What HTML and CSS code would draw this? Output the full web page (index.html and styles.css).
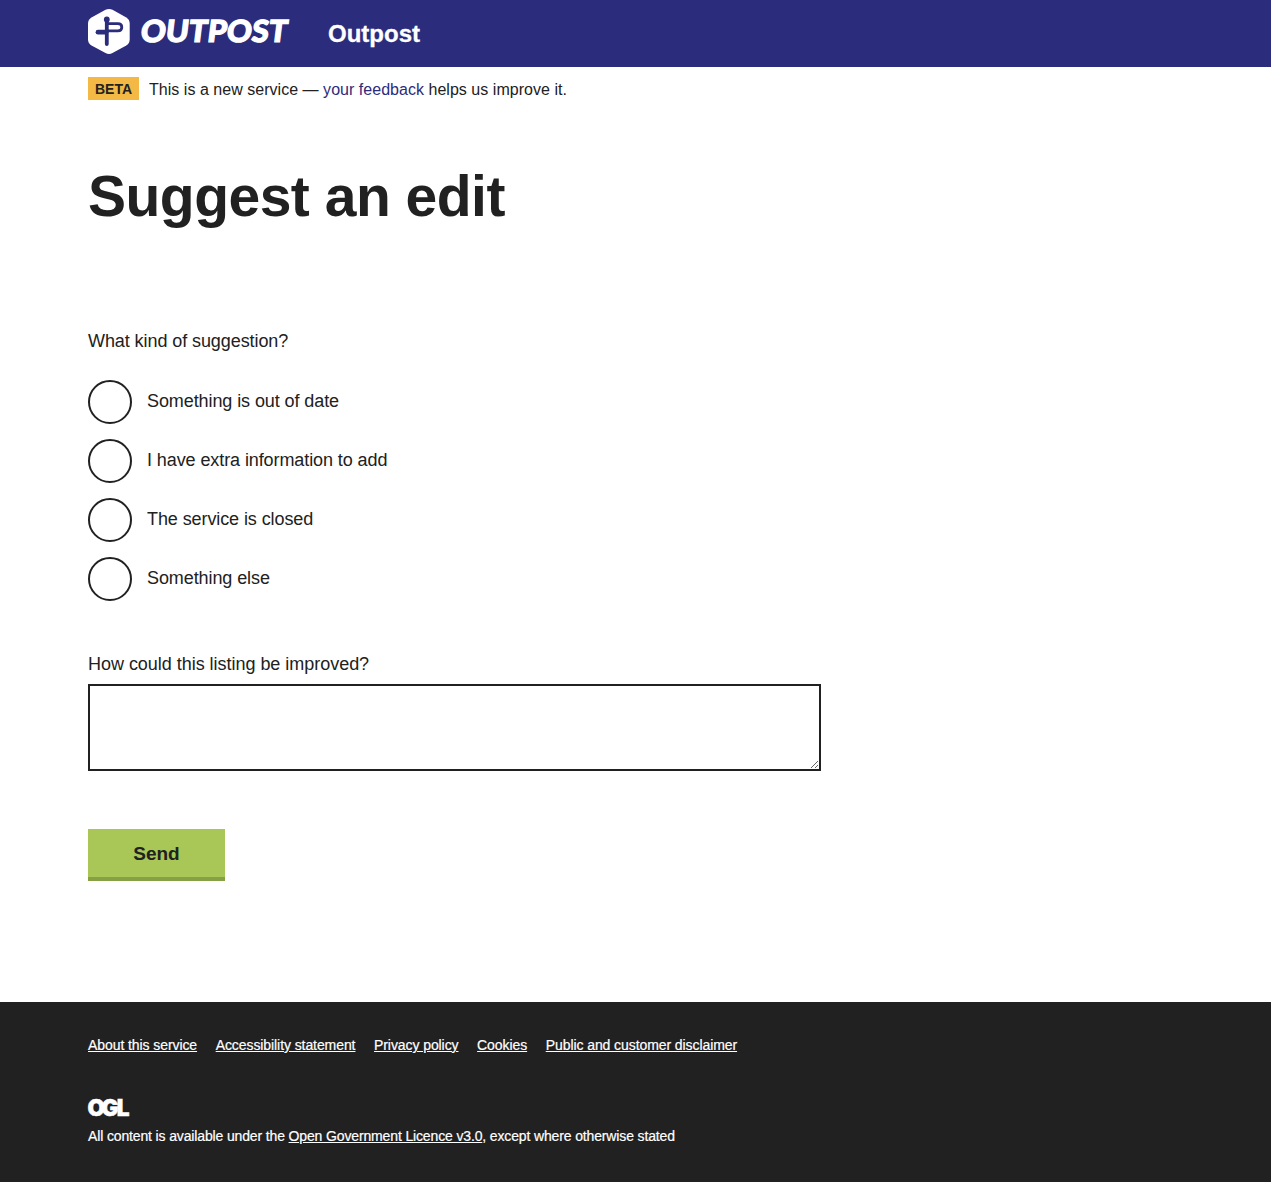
FILE: index.html
```html
<!DOCTYPE html>
<html lang="en">
<head>
<meta charset="utf-8">
<title>Suggest an edit | Outpost</title>
<link rel="stylesheet" href="styles.css">
</head>
<body>
<header class="header">
  <div class="container header__inner">
    <svg class="header__logo" width="200" height="46" viewBox="0 0 200 46" role="img" aria-label="Outpost">
      <path d="M17.5 .8Q21 -.9 24.5 .8L38.3 8.4Q41.7 10.5 41.7 14.5V30.5Q41.7 34.5 38.3 36.4L24.5 44Q21 45.8 17.5 44L3.5 36.4Q0 34.5 0 30.5V14.5Q0 10.5 3.5 8.4Z" fill="#fff"/>
      <g fill="none" stroke="#2b2c7c">
        <path d="M18.8 11V35" stroke-width="3.8" stroke-linecap="round"/>
        <path d="M18 14.6H29.8Q33.8 14.6 33.8 18.2Q33.8 21.8 29.8 21.8H18" stroke-width="2.8"/>
        <path d="M18 23.2H10" stroke-width="4.8" stroke-linecap="round"/>
      </g>
      <circle cx="18.8" cy="10.5" r="2.9" fill="#2b2c7c"/>
      <text class="wordmark" transform="translate(51.8 33.4) skewX(-7)" textLength="146.5" lengthAdjust="spacingAndGlyphs">OUTPOST</text>
    </svg>
    <span class="header__title">Outpost</span>
  </div>
</header>
<div class="container phase">
  <strong class="phase__tag">BETA</strong>
  <p class="phase__text">This is a new service — <a href="#">your feedback</a> helps us improve it.</p>
</div>
<main class="container main">
  <h1 class="title">Suggest an edit</h1>
  <form>
    <fieldset class="options">
      <legend class="options__legend">What kind of suggestion?</legend>
      <label class="option"><input class="option__input" type="radio" name="kind"><span>Something is out of date</span></label>
      <label class="option"><input class="option__input" type="radio" name="kind"><span>I have extra information to add</span></label>
      <label class="option"><input class="option__input" type="radio" name="kind"><span>The service is closed</span></label>
      <label class="option"><input class="option__input" type="radio" name="kind"><span>Something else</span></label>
    </fieldset>
    <label class="label" for="improve">How could this listing be improved?</label>
    <textarea class="textarea" id="improve"></textarea>
    <button class="button" type="button">Send</button>
  </form>
</main>
<footer class="footer">
  <div class="container">
    <nav class="footer__nav">
      <a href="#">About this service</a>
      <a href="#">Accessibility statement</a>
      <a href="#">Privacy policy</a>
      <a href="#">Cookies</a>
      <a href="#">Public and customer disclaimer</a>
    </nav>
    <svg class="footer__ogl" width="42" height="18" viewBox="0 0 42 18" role="img" aria-label="OGL">
      <text class="ogl" x="-0.6 13.6 28.8" y="16.6">OGL</text>
    </svg>
    <p class="footer__licence">All content is available under the <a href="#">Open Government Licence v3.0</a>, except where otherwise stated</p>
  </div>
</footer>
</body>
</html>
```
FILE: styles.css
```css
* { box-sizing: border-box; }

body {
  margin: 0;
  background: #fff;
  color: #212121;
  font-family: "Liberation Sans", Arial, sans-serif;
  font-size: 18px;
}

.container { width: 1095px; margin: 0 auto; }

.header { height: 67px; background: #2b2c7c; color: #fff; }
.header__inner { display: flex; align-items: flex-start; gap: 40px; padding-top: 9px; }
.header__logo { display: block; overflow: visible; }
.header__title { padding-top: 11px; font-size: 24px; line-height: 28px; font-weight: 700; -webkit-text-stroke: 0.3px #fff; }
.wordmark { font: 900 30.5px Lato, sans-serif; fill: #fff; stroke: #fff; stroke-width: 1.2px; }

.phase { display: flex; align-items: center; gap: 10px; height: 23px; margin-top: 10px; }
.phase__tag { width: 51px; height: 23px; line-height: 24px; text-align: center; background: #f4b844; font-size: 14px; }
.phase__text { margin: 0; padding-top: 2px; font-size: 16px; line-height: 24px; letter-spacing: 0.03px; }
.phase a { color: #2b2c7c; text-decoration: none; }

.main { height: 902px; padding-top: 62px; }
.title { margin: 0 0 100px; font-size: 57px; line-height: 68px; letter-spacing: -0.5px; }

.options { margin: 0; padding: 0; border: 0; }
.options__legend { padding: 0; margin-bottom: 27px; line-height: 23px; letter-spacing: -0.08px; }
.option { display: flex; align-items: center; gap: 15px; height: 44px; margin-bottom: 15px; letter-spacing: -0.09px; }
.option:last-child { margin-bottom: 0; }
.option span { padding-bottom: 2px; }
.option__input { appearance: none; width: 44px; height: 44px; margin: 0; border: 2px solid #212121; border-radius: 50%; }

.label { display: block; margin: 52px 0 9px; line-height: 22px; letter-spacing: -0.03px; }
.textarea { display: block; width: 733px; height: 87px; padding: 8px; border: 2px solid #212121; border-radius: 0; outline: 0; font: inherit; resize: vertical; }
.button { display: block; width: 137px; height: 52px; margin-top: 58px; padding: 2px 0 0; border: 0; border-bottom: 4px solid #86a045; background: #a8c756; color: #212121; font: 700 19px "Liberation Sans", Arial, sans-serif; }

.footer { height: 180px; padding-top: 34px; background: #212121; color: #fff; font-size: 14px; line-height: 18px; -webkit-text-stroke: 0.2px #fff; }
.footer a { color: #fff; text-decoration: underline; }
.footer__nav { display: flex; gap: 18.6px; letter-spacing: -0.08px; }
.footer__ogl { display: block; margin-top: 45px; overflow: visible; }
.ogl { font: 900 22.5px Inter, sans-serif; fill: #fff; stroke: #fff; stroke-width: 0.5px; }
.footer__licence { margin: 10px 0 0; letter-spacing: -0.14px; }
```
